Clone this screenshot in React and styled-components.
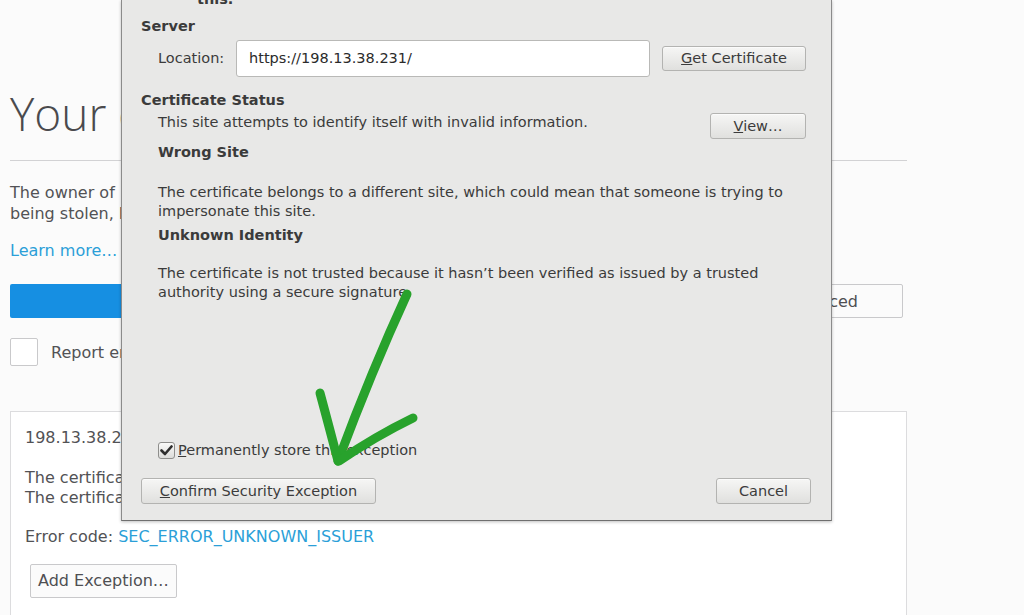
import React from 'react';
import styled, { createGlobalStyle } from 'styled-components';

const GlobalStyle = createGlobalStyle`
  html, body {
    margin: 0;
    padding: 0;
  }

  body {
    background: #fbfbfb;
    font-family: "DejaVu Sans", "Liberation Sans", sans-serif;
    overflow: hidden;
  }
`;

const Screen = styled.div`
  position: relative;
  width: 1024px;
  height: 615px;
  overflow: hidden;
`;

/* ---------- error page behind the dialog ---------- */

const ErrorPage = styled.main`
  width: 897px;
  margin-left: 10px;
  color: #525255;
  font-size: 16px;
`;

const Title = styled.h1`
  margin: 0;
  padding-top: 84px;
  font-family: "Open Sans", "DejaVu Sans", sans-serif;
  font-weight: 300;
  font-size: 46px;
  line-height: 58px;
  color: #4a4a4d;
  white-space: nowrap;
`;

const Divider = styled.hr`
  margin: 18px 0 0;
  border: none;
  border-top: 1px solid #d2d2d4;
`;

const Intro = styled.p`
  margin: 21px 0 0;
  line-height: 21px;
  white-space: nowrap;
`;

const LearnMore = styled.a`
  display: block;
  margin-top: 16px;
  line-height: 21px;
  color: #2b9fd8;
  text-decoration: none;
`;

const ButtonRow = styled.div`
  display: flex;
  justify-content: space-between;
  margin-top: 23px;
  padding-right: 4px;
`;

const PrimaryButton = styled.button`
  width: 320px;
  height: 34px;
  border: none;
  border-radius: 2px;
  background: #168fe2;
  color: #fff;
  font: inherit;
`;

const SecondaryButton = styled.button`
  width: 169px;
  height: 34px;
  border: 1px solid #c9c9cb;
  border-radius: 2px;
  background: #fbfbfb;
  color: #4f4f52;
  font: inherit;
`;

const ReportRow = styled.label`
  display: flex;
  align-items: center;
  gap: 13px;
  margin-top: 20px;
  height: 28px;
`;

const ReportBox = styled.span`
  width: 28px;
  height: 28px;
  box-sizing: border-box;
  border: 1px solid #c9c9cb;
  border-radius: 2px;
  background: #fff;
`;

const AdvancedPanel = styled.section`
  margin-top: 45px;
  height: 260px;
  padding: 16px 14px;
  border: 1px solid #dcdcde;
  background: #fff;
  line-height: 20px;
`;

const PanelLine = styled.div`
  white-space: nowrap;
`;

const Blank = styled.div`
  height: 20px;
`;

const ErrorCode = styled.div`
  margin-top: 19px;
  line-height: 20px;

  a {
    color: #2b9fd8;
    text-decoration: none;
  }
`;

const ExceptionButton = styled.button`
  margin: 17px 0 0 5px;
  height: 34px;
  padding: 0 7px;
  border: 1px solid #c9c9cb;
  border-radius: 2px;
  background: #fbfbfb;
  color: #4f4f52;
  font: inherit;
`;

/* ---------- add exception dialog ---------- */

const Dialog = styled.div`
  position: absolute;
  left: 121px;
  top: 0;
  width: 711px;
  height: 521px;
  box-sizing: border-box;
  display: flex;
  flex-direction: column;
  background: #e8e8e7;
  border: 1px solid #8b8b8b;
  border-top: none;
  border-bottom-color: #6f6f6f;
  box-shadow: 0 1px 3px rgba(0, 0, 0, 0.25);
  color: #3b3b3b;
  font-size: 14.5px;
  line-height: 17px;
`;

const Content = styled.div`
  padding: 0 25px 0 19px;
`;

const CutLine = styled.div`
  margin-top: -9px;
  padding-left: 56px;
  font-weight: bold;
`;

const SectionTitle = styled.div`
  margin-top: ${({ $top }) => $top}px;
  padding-left: ${({ $indent }) => ($indent ? 17 : 0)}px;
  font-weight: bold;
`;

const LocationRow = styled.div`
  display: flex;
  align-items: center;
  gap: 12px;
  margin-top: 5px;
  padding-left: 17px;
`;

const FieldLabel = styled.span`
  width: 66px;
`;

const UrlInput = styled.div`
  flex: 1;
  height: 37px;
  box-sizing: border-box;
  display: flex;
  align-items: center;
  padding-left: 12px;
  background: #fff;
  border: 1px solid #b9b9b7;
  border-radius: 3px;
  color: #2b2b2b;
`;

const DialogButton = styled.button`
  width: ${({ $width }) => $width}px;
  height: ${({ $height }) => $height || 26}px;
  flex: none;
  padding: 0;
  border: 1px solid #b3b3b1;
  border-radius: 3px;
  background: linear-gradient(#f6f6f5, #e0e0de);
  box-shadow: 0 1px 0 rgba(255, 255, 255, 0.6) inset;
  color: #3b3b3b;
  font: inherit;
  line-height: 1;
`;

const Key = styled.span`
  text-decoration: underline;
`;

const StatusRow = styled.div`
  display: flex;
  justify-content: space-between;
  align-items: flex-start;
  margin-top: 4px;
  padding-left: 17px;
`;

const StatusText = styled.span`
  padding-top: 1px;
`;

const Description = styled.p`
  margin: ${({ $top }) => $top}px 0 0;
  padding-left: 17px;
  line-height: 19px;
  white-space: nowrap;
`;

const Footer = styled.div`
  margin-top: auto;
  padding: 0 20px 16px 19px;
`;

const StoreRow = styled.label`
  display: flex;
  align-items: center;
  gap: 3px;
  padding-left: 17px;
  transform: translateY(1px);
`;

const CheckBox = styled.span`
  width: 17px;
  height: 17px;
  box-sizing: border-box;
  display: flex;
  align-items: center;
  justify-content: center;
  border: 1px solid #8e8e8c;
  border-radius: 3px;
  background: linear-gradient(#fafaf9, #dcdcda);
`;

const ActionRow = styled.div`
  display: flex;
  justify-content: space-between;
  margin-top: 20px;
`;

const ArrowLayer = styled.svg`
  position: absolute;
  left: 0;
  top: 0;
  pointer-events: none;
`;

export default function App() {
  return (
    <Screen>
      <GlobalStyle />
      <ErrorPage>
        <Title>Your connection is not secure</Title>
        <Divider />
        <Intro>
          The owner of 198.13.38.231 has configured their website improperly. To protect your information from
          <br />
          being stolen, Firefox has not connected to this website.
        </Intro>
        <LearnMore href="#">Learn more…</LearnMore>
        <ButtonRow>
          <PrimaryButton>Go Back</PrimaryButton>
          <SecondaryButton>Advanced</SecondaryButton>
        </ButtonRow>
        <ReportRow>
          <ReportBox />
          <span>Report errors like this to help Mozilla identify and block malicious sites</span>
        </ReportRow>
        <AdvancedPanel>
          <PanelLine>198.13.38.231 uses an invalid security certificate.</PanelLine>
          <Blank />
          <PanelLine>The certificate is not trusted because it is self-signed.</PanelLine>
          <PanelLine>The certificate is only valid for localhost</PanelLine>
          <ErrorCode>
            Error code: <a href="#">SEC_ERROR_UNKNOWN_ISSUER</a>
          </ErrorCode>
          <ExceptionButton>Add Exception…</ExceptionButton>
        </AdvancedPanel>
      </ErrorPage>

      <Dialog>
        <Content>
          <CutLine>this.</CutLine>
          <SectionTitle $top={10}>Server</SectionTitle>
          <LocationRow>
            <FieldLabel>Location:</FieldLabel>
            <UrlInput>https://198.13.38.231/</UrlInput>
            <DialogButton $width={144} $height={25}>
              <Key>G</Key>et Certificate
            </DialogButton>
          </LocationRow>
          <SectionTitle $top={15}>Certificate Status</SectionTitle>
          <StatusRow>
            <StatusText>This site attempts to identify itself with invalid information.</StatusText>
            <DialogButton $width={96}>
              <Key>V</Key>iew…
            </DialogButton>
          </StatusRow>
          <SectionTitle $top={5} $indent>Wrong Site</SectionTitle>
          <Description $top={22}>
            The certificate belongs to a different site, which could mean that someone is trying to
            <br />
            impersonate this site.
          </Description>
          <SectionTitle $top={6} $indent>Unknown Identity</SectionTitle>
          <Description $top={20}>
            The certificate is not trusted because it hasn’t been verified as issued by a trusted
            <br />
            authority using a secure signature.
          </Description>
        </Content>
        <Footer>
          <StoreRow>
            <CheckBox>
              <svg width="13" height="11" viewBox="0 0 13 11">
                <path d="M1.5 5.5 L5 9 L11.5 1.5" fill="none" stroke="#2e2e2e" strokeWidth="2.6" strokeLinecap="round" strokeLinejoin="round" />
              </svg>
            </CheckBox>
            <span>
              <Key>P</Key>ermanently store this exception
            </span>
          </StoreRow>
          <ActionRow>
            <DialogButton $width={235}>
              <Key>C</Key>onfirm Security Exception
            </DialogButton>
            <DialogButton $width={95}>Cancel</DialogButton>
          </ActionRow>
        </Footer>
      </Dialog>

      <ArrowLayer width="1024" height="615" viewBox="0 0 1024 615">
        <g fill="none" stroke="#28a22c" strokeWidth="9" strokeLinecap="round" strokeLinejoin="round">
          <path d="M407 294 Q372 370 338 461" />
          <path d="M320 393 Q330 430 338 461" />
          <path d="M413 418 Q376 436 339 461" />
        </g>
      </ArrowLayer>
    </Screen>
  );
}
